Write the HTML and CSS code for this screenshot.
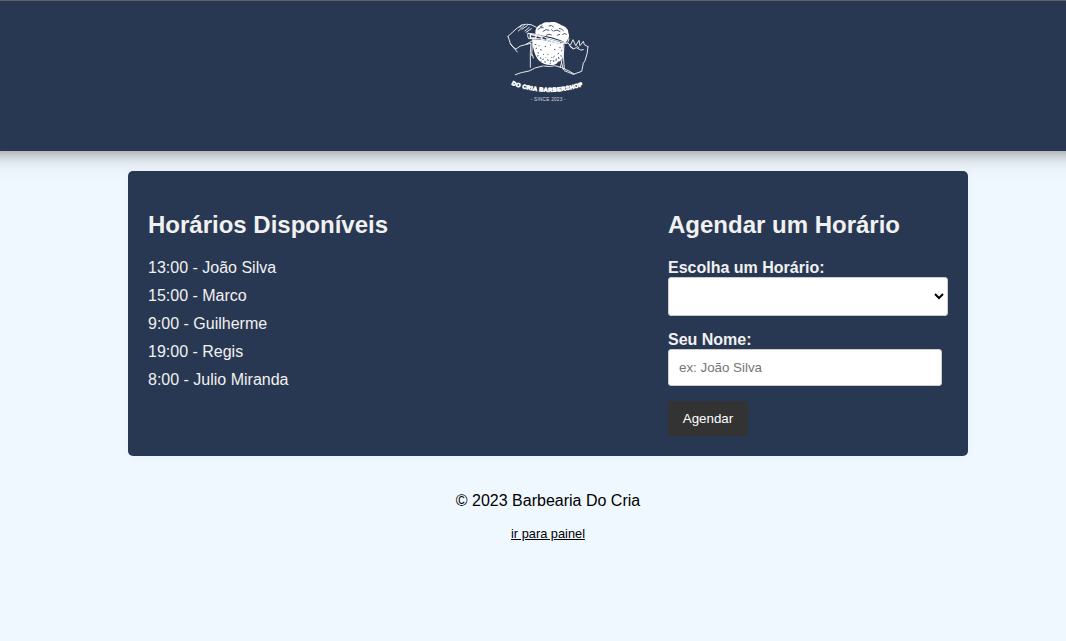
FILE: index.html
```html
<!DOCTYPE html>
<html lang="pt-BR">
<head>
<meta charset="utf-8">
<title>Barbearia Do Cria</title>
<link rel="stylesheet" href="styles.css">
</head>
<body>
<div class="page">
<header class="header">
  <svg class="logo" viewBox="0 0 288 288" role="img" aria-label="Do Cria Barbershop">
    <defs>
      <path id="arc" d="M34 217 Q62 234 145 240 Q220 237 258 217"/>
      <clipPath id="hair"><path d="M107 69C103 52 113 39 125 37C132 29 145 31 151 31C164 27 179 35 184 40C199 44 206 54 205 64C211 71 205 79 201 87L190 98L192 126C187 142 176 153 163 158C147 162 126 157 116 145C106 133 99 114 96 82L107 79Z"/></clipPath>
    </defs>
    <g clip-path="url(#hair)">
      <rect class="fill" x="90" y="25" width="125" height="140"/>
      <g class="gap">
        <path d="M113 53q8-9 18-6M128 59q9-10 20-4M146 42q8-4 15 3M161 57q10-7 20 2M177 49q9 1 14 8M187 68q6-6 13-1M138 70q9-6 17-1M120 45l8-4M171 70l9-3M154 52l5 6"/>
        <path d="M111 73Q150 70 198 95" stroke-width="4"/>
        <path d="M104 97l5 1M107 110l4-2M113 122l4 1M111 132l5-1M121 136l2 5M128 144l3-4M135 147v5M143 142l2 5M151 149l2-5M159 144l3 6M168 147l1-7M177 141l-2-6M181 131l5 2M173 126l4-3M183 117l4-2M178 106l4 1M164 132l-4 3M120 113l5 1M134 104l4-1M150 98l3 2M142 128l3-1M162 112l4 1M129 126l3 2M121 150l4-3M149 155l4-2M172 152l4-4M136 138l2-2M154 136l3 1M188 125h4M115 103l3-3"/>
      </g>
    </g>
    <path class="gap solid" d="M84 65L121 70L137 78L188 91L178 94L126 82L90 80Z"/>
    <g class="line">
      <path d="M84 64Q104 65 118 70L139 77L202 94Q174 97 145 86L119 80L86 80Q80 71 84 64Z"/>
      <path class="heavy" d="M91 67l18 4-2 7-16-1ZM113 71l12 4 1 7M140 81l38 11"/>
      <path d="M24 73L48 51L65 39Q80 35 93 38L109 46M65 39L60 46M73 40L55 57M82 41L66 52M88 46L75 57M94 50L78 61M24 73L31 94Q33 101 47 111M31 96L52 120M48 111Q59 100 76 98L92 94M78 97L97 86"/>
      <path d="M93 93L91 122L91 166M97 96L95 130M97 128l3 10"/>
      <path d="M46 188Q62 181 87 177Q105 165 129 162M132 162Q149 166 164 161Q181 163 207 177L222 186"/>
      <path d="M188 93L187 134Q185 155 181 166M192 99L190 133M183 145L190 173M190 132L193 170"/>
      <path d="M207 80L203 92L211 100L219 83L227 101L237 85L240 101L250 88L253 98L264 104M264 104Q263 126 255 146Q248 153 248 164L245 178L220 187L193 176M207 100L219 111L229 107L242 114L250 113M211 104l6 2M230 102l6 5"/>
    </g>
    <text class="brand"><textPath href="#arc" textLength="220" lengthAdjust="spacing">DO CRIA BARBERSHOP</textPath></text>
    <text class="since" x="92" y="266" textLength="105">- SINCE 2023 -</text>
  </svg>
</header>
<main class="card">
  <section>
    <h2>Horários Disponíveis</h2>
    <ul class="slots">
      <li>13:00 - João Silva</li>
      <li>15:00 - Marco</li>
      <li>9:00 - Guilherme</li>
      <li>19:00 - Regis</li>
      <li>8:00 - Julio Miranda</li>
    </ul>
  </section>
  <section class="booking">
    <h2>Agendar um Horário</h2>
    <form>
      <label for="slot">Escolha um Horário:</label>
      <select id="slot"><option></option></select>
      <label for="name">Seu Nome:</label>
      <input id="name" type="text" placeholder="ex: João Silva">
      <button type="button">Agendar</button>
    </form>
  </section>
</main>
<footer class="footer">
  <p>© 2023 Barbearia Do Cria</p>
  <a href="#">ir para painel</a>
</footer>
</div>
</body>
</html>
```
FILE: styles.css
```css
* { box-sizing: border-box; }
html { overflow: hidden; }
body {
  margin: 0;
  background: #f0f8ff;
  font: 16px/18px "Liberation Sans", Arial, sans-serif;
  color: #000;
}
.page { width: 1096px; }
.header {
  height: 151px;
  margin: 0 -20px;
  padding-top: 12px;
  border-top: 1px solid #5f6062;
  background: #293852;
  box-shadow: 0 0 20px rgba(0, 0, 0, .5);
  display: flex;
  justify-content: center;
  align-items: flex-start;
}
.logo { width: 96px; height: 96px; margin-top: -1px; }
.fill { fill: #fff; }
.gap { fill: none; stroke: #293852; stroke-width: 2.5; }
.solid { fill: #293852; }
.line { fill: none; stroke: #f4f6f9; stroke-width: 2.8; stroke-linecap: round; stroke-linejoin: round; }
.heavy { stroke-width: 4.5; }
.brand { font: 900 17.5px "Liberation Sans", Arial, sans-serif; fill: #fff; stroke: #fff; stroke-width: 2; }
.since { font: 14px "Liberation Sans", Arial, sans-serif; fill: #d5dae2; }
.card {
  width: 840px;
  height: 285px;
  margin: 20px auto 0;
  padding: 20px;
  border-radius: 5px;
  background: #293852;
  box-shadow: 0 0 10px rgba(0, 0, 0, .04);
  color: #f1f1f1;
  display: flex;
  justify-content: space-between;
}
h2 { margin: 20px 0; font-size: 24px; line-height: 28px; }
.slots { margin: 0; padding: 0; list-style: none; }
.slots li { margin-bottom: 10px; }
.booking { width: 280px; }
label { display: block; font-weight: bold; }
select, input {
  display: block;
  border: 1px solid #ccc;
  border-radius: 3px;
  background: #fff;
  font: 13.333px "Liberation Sans", Arial, sans-serif;
}
select { width: 280px; height: 39px; margin: 0 0 15px; }
input { width: 274px; height: 37px; margin: 0 0 15px; padding: 0 10px; }
input::placeholder { color: #757575; }
button {
  display: block;
  width: 80px;
  height: 35px;
  padding: 0;
  border: 0;
  border-radius: 3px;
  background: #333;
  color: #fff;
  font: 13.333px "Liberation Sans", Arial, sans-serif;
}
.footer { padding-top: 36px; text-align: center; }
.footer p { margin: 0 0 14px; }
.footer a { font-size: 12.8px; color: #000; }
```
